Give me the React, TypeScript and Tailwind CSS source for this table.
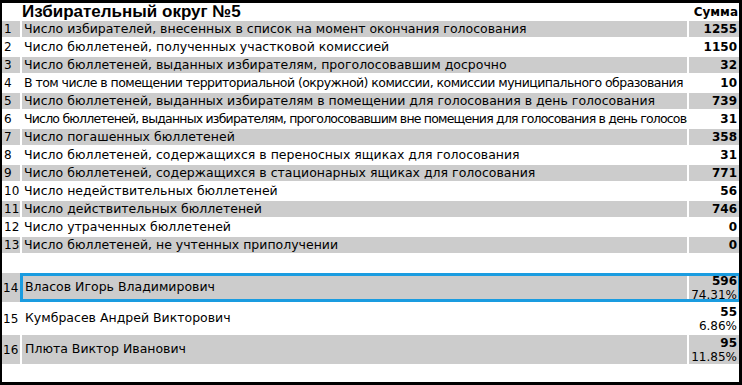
import React from 'react';

interface StatRow {
    num: number;
    label: string;
    value: string;
    tight?: string;
}

interface CandidateRow {
    num: number;
    name: string;
    votes: string;
    percent: string;
    selected?: boolean;
}

const stats: StatRow[] = [
    { num: 1, label: 'Число избирателей, внесенных в список на момент окончания голосования', value: '1255' },
    { num: 2, label: 'Число бюллетеней, полученных участковой комиссией', value: '1150' },
    { num: 3, label: 'Число бюллетеней, выданных избирателям, проголосовавшим досрочно', value: '32' },
    { num: 4, label: 'В том числе в помещении территориальной (окружной) комиссии, комиссии муниципального образования', value: '10', tight: 'tracking-[-0.55px]' },
    { num: 5, label: 'Число бюллетеней, выданных избирателям в помещении для голосования в день голосования', value: '739' },
    { num: 6, label: 'Число бюллетеней, выданных избирателям, проголосовавшим вне помещения для голосования в день голосования', value: '31', tight: 'tracking-[-0.8px]' },
    { num: 7, label: 'Число погашенных бюллетеней', value: '358' },
    { num: 8, label: 'Число бюллетеней, содержащихся в переносных ящиках для голосования', value: '31' },
    { num: 9, label: 'Число бюллетеней, содержащихся в стационарных ящиках для голосования', value: '771' },
    { num: 10, label: 'Число недействительных бюллетеней', value: '56' },
    { num: 11, label: 'Число действительных бюллетеней', value: '746' },
    { num: 12, label: 'Число утраченных бюллетеней', value: '0' },
    { num: 13, label: 'Число бюллетеней, не учтенных приполучении', value: '0' },
];

const candidates: CandidateRow[] = [
    { num: 14, name: 'Власов Игорь Владимирович', votes: '596', percent: '74.31%', selected: true },
    { num: 15, name: 'Кумбрасев Андрей Викторович', votes: '55', percent: '6.86%' },
    { num: 16, name: 'Плюта Виктор Иванович', votes: '95', percent: '11.85%' },
];

const rowGrid = 'grid grid-cols-[18px_665px_50px] gap-x-[2px]';

const App: React.FC = () => {
    return (
        <div
            className="w-[742px] h-[385px] bg-white border-t-[3px] border-l-2 border-r-[3px] border-b-[3px] border-black overflow-hidden text-black"
            style={{ fontFamily: '"DejaVu Sans", Verdana, sans-serif' }}
        >
            <div className="flex flex-col gap-y-[2px]">
                {/* header */}
                <div className={`${rowGrid} h-[16px]`}>
                    <div></div>
                    <div
                        className="font-bold text-[17px] leading-[18px]"
                        style={{ fontFamily: '"Liberation Sans", Arial, sans-serif' }}
                    >
                        Избирательный округ №5
                    </div>
                    <div className="font-bold text-[12px] leading-[18px] text-right pr-[1px]">Сумма</div>
                </div>

                {stats.map((row, index) => {
                    const bg = index % 2 === 0 ? 'bg-[#cccccc]' : 'bg-white';
                    return (
                        <div key={row.num} className={`${rowGrid} h-[16px] text-[12.5px] leading-[16px]`}>
                            <div className={`${bg} pl-[2px] text-[12px]`}>{row.num}</div>
                            <div className={`${bg} pl-[2px] whitespace-nowrap overflow-hidden ${row.tight ?? ''}`}>
                                {row.label}
                            </div>
                            <div className={`${bg} pr-[2px] text-right font-bold text-[12px]`}>{row.value}</div>
                        </div>
                    );
                })}

                {/* empty separator row */}
                <div className="h-[16px]"></div>

                {candidates.map((c, index) => {
                    const bg = index % 2 === 0 ? 'bg-[#cccccc]' : 'bg-white';
                    return (
                        <div key={c.num} className={`${rowGrid} relative h-[29px] text-[12.5px]`}>
                            <div className={`${bg} pl-[1px] flex items-center text-[12px]`}>{c.num}</div>
                            <div className={`${bg} pl-[3px] flex items-center`}>{c.name}</div>
                            <div className={`${bg} pr-[2px] text-right text-[12px] leading-[14px] flex flex-col justify-center`}>
                                <span className="font-bold">{c.votes}</span>
                                <span>{c.percent}</span>
                            </div>
                            {c.selected && (
                                <span className="absolute left-[18px] top-0 bottom-0 right-[-2px] border-[3px] border-[#1a9ce0] pointer-events-none"></span>
                            )}
                        </div>
                    );
                })}
            </div>
        </div>
    );
};

export default App;
